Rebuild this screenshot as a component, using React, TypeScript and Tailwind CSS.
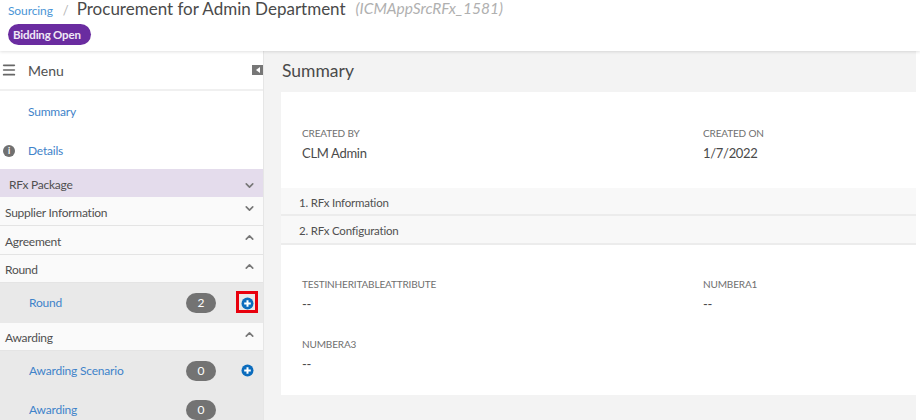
import { ChevronDown, ChevronUp, Menu } from "lucide-react";

const font = { fontFamily: '"Lato", "Liberation Sans", sans-serif' };

function PlusIcon() {
  return (
    <svg width="13" height="13" viewBox="0 0 13 13">
      <circle cx="6.5" cy="6.5" r="6" fill="#0b6cbd" />
      <path d="M6.5 3.2v6.6M3.2 6.5h6.6" stroke="#fff" strokeWidth="2" />
    </svg>
  );
}

function Section({ label, open, tint, height }: { label: string; open?: boolean; tint?: boolean; height: string }) {
  return (
    <div
      className={`flex items-center justify-between pr-[7px] text-[12px] tracking-[-0.25px] text-[#505050] ${height} ${
        tint ? "bg-[#e4dcec] pl-[9px]" : "border-b border-[#e4e4e4] bg-[#fafafa] pl-[5px]"
      }`}
    >
      <span className="pt-[3px]">{label}</span>
      {open ? (
        <ChevronUp size={13} strokeWidth={3} className="mb-[5px] text-[#777]" />
      ) : (
        <ChevronDown size={13} strokeWidth={3} className={tint ? "mt-[4px] text-[#777]" : "mb-[5px] text-[#777]"} />
      )}
    </div>
  );
}

function Item({ label, count, plus, boxed, height }: { label: string; count: number; plus?: boolean; boxed?: boolean; height: string }) {
  return (
    <div className={`flex items-center bg-[#e9e9e9] pl-[29px] text-[12px] tracking-[-0.2px] text-[#3f83c9] ${height}`}>
      <span className="w-[157px]">{label}</span>
      <span className="flex h-[20px] w-[30px] items-center justify-center rounded-full bg-[#737373] text-[12px] text-white">
        {count}
      </span>
      {plus && (
        <span
          className={`ml-[20px] flex h-[22px] w-[22px] items-center justify-center ${
            boxed ? "mb-[3px] border-[3px] border-[#e8000d] pt-[3px]" : ""
          }`}
        >
          <PlusIcon />
        </span>
      )}
    </div>
  );
}

function Field({ label, value }: { label: string; value: string }) {
  return (
    <div>
      <div className="text-[10px] leading-[14px] tracking-[-0.15px] text-[#6f6f6f]">{label}</div>
      <div className="mt-[3px] text-[13px] leading-[20px] tracking-[-0.3px] text-[#4a4a4a]">{value}</div>
    </div>
  );
}

export default function App() {
  return (
    <div style={font} className="h-[420px] w-[920px] overflow-hidden bg-white">
      <div className="relative z-10 h-[51px] bg-white pl-[8px] shadow-[0_1px_3px_rgba(0,0,0,0.12)]">
        <div className="flex h-[21px] items-center">
          <span className="text-[12px] tracking-[-0.1px] text-[#4b95d6]">Sourcing</span>
          <span className="ml-[10px] text-[13px] text-[#b5b5b5]">/</span>
          <span className="mb-[4px] ml-[8px] text-[17px] leading-[17px] text-[#4a4a4a]">Procurement for Admin Department</span>
          <span className="mb-[4px] ml-[10px] text-[15.5px] leading-[17px] italic text-[#b0b0b0]">(ICMAppSrcRFx_1581)</span>
        </div>
        <span className="mt-[1px] inline-flex h-[21px] items-center rounded-full bg-[#6a2ca0] pl-[5px] pr-[10px] text-[11.5px] font-bold tracking-[-0.2px] text-[#f0e8f6]">
          Bidding Open
        </span>
      </div>

      <div className="flex h-[369px] w-[916px]">
        <aside className="w-[264px] shrink-0 overflow-hidden border-r border-[#e6e6e6] bg-white">
          <div className="flex h-[40px] items-center justify-between border-b-2 border-[#f0f0f0] pl-[1px] text-[14px] text-[#505050]">
            <span className="flex items-center">
              <Menu size={16} strokeWidth={2.5} className="text-[#666]" />
              <span className="ml-[11px]">Menu</span>
            </span>
            <span className="flex h-[10px] w-[11px] items-center justify-center bg-[#777]">
              <span className="h-0 w-0 border-y-[3px] border-r-[4px] border-y-transparent border-r-white" />
            </span>
          </div>
          <div className="flex h-[39px] items-center pl-[28px] pt-[2px] text-[12px] tracking-[-0.2px] text-[#3f83c9]">Summary</div>
          <div className="flex h-[39px] items-center pl-[3px] pt-[2px] text-[12px] tracking-[-0.2px] text-[#3f83c9]">
            <span className="flex h-[12px] w-[12px] items-center justify-center rounded-full bg-[#707070] text-[9px] font-bold text-white">
              i
            </span>
            <span className="ml-[13px]">Details</span>
          </div>
          <Section label="RFx Package" tint height="h-[28px]" />
          <Section label="Supplier Information" height="h-[29px]" />
          <Section label="Agreement" open height="h-[29px]" />
          <Section label="Round" open height="h-[28px]" />
          <Item label="Round" count={2} plus boxed height="h-[40px]" />
          <Section label="Awarding" open height="h-[28px]" />
          <Item label="Awarding Scenario" count={0} plus height="h-[39px]" />
          <Item label="Awarding" count={0} height="h-[40px]" />
        </aside>

        <main className="min-w-0 flex-1 bg-[#f3f3f3] pl-[17px]">
          <h2 className="flex h-[41px] items-center pl-[1px] text-[17.5px] font-normal text-[#4a4a4a]">Summary</h2>
          <div className="h-[303px] bg-white">
            <div className="grid h-[96px] grid-cols-[401px_1fr] pl-[21px] pt-[34px]">
              <Field label="CREATED BY" value="CLM Admin" />
              <Field label="CREATED ON" value="1/7/2022" />
            </div>
            <div className="flex h-[28px] items-center border-b-2 border-[#ececec] bg-[#f8f8f8] pl-[18px] pt-[3px] text-[11.5px] tracking-[-0.2px] text-[#505050]">
              1. RFx Information
            </div>
            <div className="flex h-[29px] items-center border-b-2 border-[#ececec] bg-[#f8f8f8] pl-[18px] pt-[3px] text-[11.5px] tracking-[-0.2px] text-[#505050]">
              2. RFx Configuration
            </div>
            <div className="grid grid-cols-[401px_1fr] gap-y-[23px] pl-[21px] pt-[32px]">
              <Field label="TESTINHERITABLEATTRIBUTE" value="--" />
              <Field label="NUMBERA1" value="--" />
              <Field label="NUMBERA3" value="--" />
            </div>
          </div>
        </main>
      </div>
    </div>
  );
}
